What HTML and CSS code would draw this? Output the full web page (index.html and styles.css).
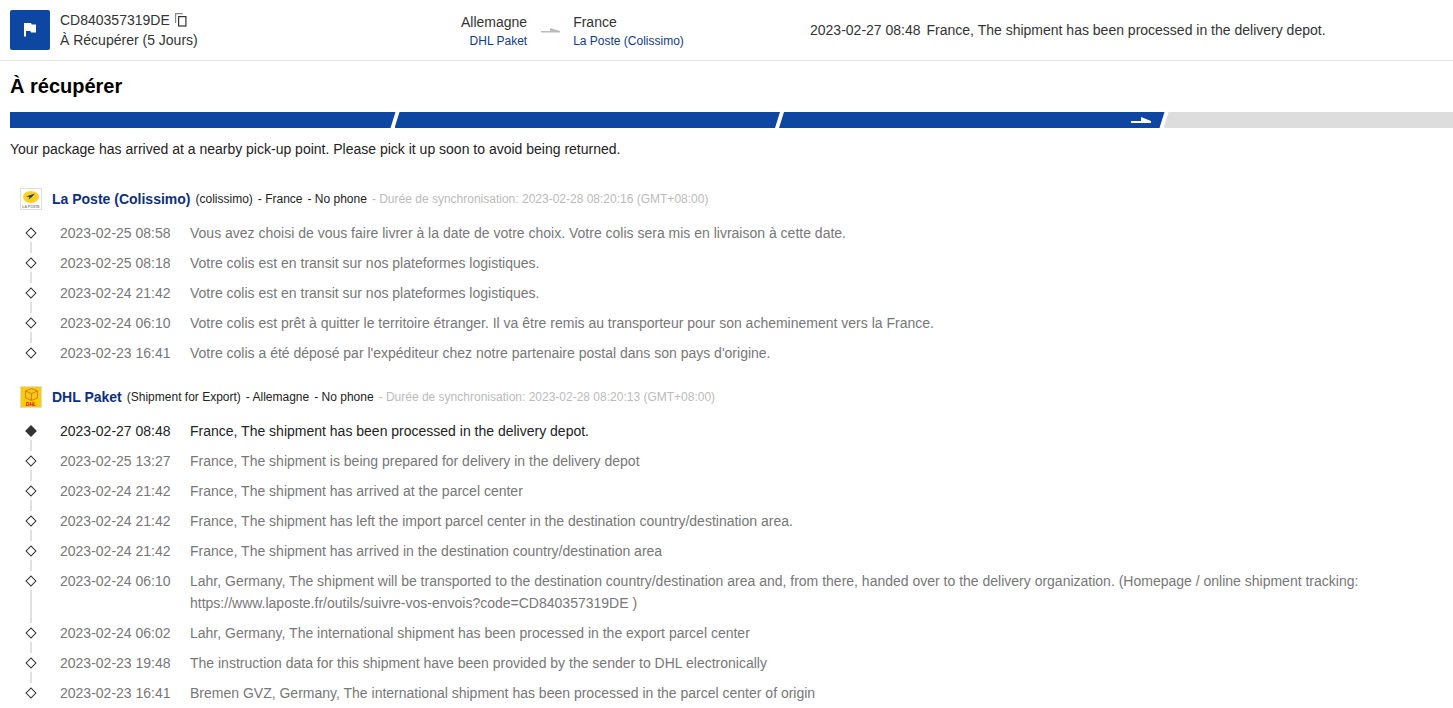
FILE: index.html
```html
<!DOCTYPE html>
<html>
<head>
<meta charset="utf-8">
<title>Suivi de colis</title>
<link rel="stylesheet" href="styles.css">
</head>
<body>

<div class="top">
	<div class="flag">
		<svg width="16" height="16" viewBox="0 0 16 16"><path d="M2 1h7l.6 1.500H14v8H9l-.6-1.500H4v5.500H2z" fill="#fff"/></svg>
	</div>
	<div class="num">
		<div class="num-code">CD840357319DE
			<svg class="copy" width="12" height="14" viewBox="0 0 12 14"><path d="M.6 10V.6h7" fill="none" stroke="#888" stroke-width="1.2"/><rect x="3.600" y="3.600" width="7.300" height="9.400" fill="#fff" stroke="#333" stroke-width="1.200"/></svg>
		</div>
		<div class="num-state">À Récupérer (5 Jours)</div>
	</div>
	<div class="route">
		<div class="from">
			<div>Allemagne</div>
			<div class="carrier">DHL Paket</div>
		</div>
		<svg class="route-arrow" width="19" height="5" viewBox="0 0 19 5"><path d="M0 3h19v1.500H0zM9 0l10 3H9z" fill="#bbb"/></svg>
		<div class="to">
			<div>France</div>
			<div class="carrier">La Poste (Colissimo)</div>
		</div>
	</div>
	<div class="last">
		<span class="last-time">2023-02-27 08:48</span>
		<span>France, The shipment has been processed in the delivery depot.</span>
	</div>
</div>

<h1 class="state">À récupérer</h1>

<div class="bar">
	<div class="seg on"></div>
	<div class="seg on"></div>
	<div class="seg on">
		<svg width="20" height="6" viewBox="0 0 20 6"><path d="M0 4h20v2H0zM10 0l10 4H10z" fill="#fff"/></svg>
	</div>
	<div class="seg"></div>
</div>

<p class="hint">Your package has arrived at a nearby pick-up point. Please pick it up soon to avoid being returned.</p>

<div class="group first">
	<div class="head">
		<svg class="logo" width="22" height="22" viewBox="0 0 22 22">
			<rect x=".5" y=".5" width="21" height="21" fill="#fff" stroke="#ddd"/>
			<ellipse cx="11" cy="9" rx="8" ry="6" fill="#ffd11a"/>
			<path d="M6 8.500l9-3-3 3.500-3.500 2.500 1-2.500z" fill="#1c3f94"/>
			<text class="logo-post" x="11" y="19.500">LA POSTE</text>
		</svg>
		<b>La Poste (Colissimo)</b>
		<span class="sub">(colissimo)</span>
		<span class="sub">- France</span>
		<span class="sub">- No phone</span>
		<span class="sync">- Durée de synchronisation: 2023-02-28 08:20:16 (GMT+08:00)</span>
	</div>
	<div class="row"><span class="time">2023-02-25 08:58</span><span class="msg">Vous avez choisi de vous faire livrer à la date de votre choix. Votre colis sera mis en livraison à cette date.</span></div>
	<div class="row"><span class="time">2023-02-25 08:18</span><span class="msg">Votre colis est en transit sur nos plateformes logistiques.</span></div>
	<div class="row"><span class="time">2023-02-24 21:42</span><span class="msg">Votre colis est en transit sur nos plateformes logistiques.</span></div>
	<div class="row"><span class="time">2023-02-24 06:10</span><span class="msg">Votre colis est prêt à quitter le territoire étranger. Il va être remis au transporteur pour son acheminement vers la France.</span></div>
	<div class="row end"><span class="time">2023-02-23 16:41</span><span class="msg">Votre colis a été déposé par l'expéditeur chez notre partenaire postal dans son pays d'origine.</span></div>
</div>

<div class="group">
	<div class="head">
		<svg class="logo" width="22" height="22" viewBox="0 0 22 22">
			<rect x=".5" y=".5" width="21" height="21" fill="#ffcc00" stroke="#ddd"/>
			<path d="M5.500 5l6-2.500 6 2.500v7l-6 2.500-6-2.500zM5.500 5l6 2.500 6-2.500M11.500 7.500v7" fill="#f5c518" stroke="#d2691e" stroke-width=".8"/>
			<text class="logo-dhl" x="11" y="20">DHL</text>
		</svg>
		<b>DHL Paket</b>
		<span class="sub">(Shipment for Export)</span>
		<span class="sub">- Allemagne</span>
		<span class="sub">- No phone</span>
		<span class="sync">- Durée de synchronisation: 2023-02-28 08:20:13 (GMT+08:00)</span>
	</div>
	<div class="row now"><span class="time">2023-02-27 08:48</span><span class="msg">France, The shipment has been processed in the delivery depot.</span></div>
	<div class="row"><span class="time">2023-02-25 13:27</span><span class="msg">France, The shipment is being prepared for delivery in the delivery depot</span></div>
	<div class="row"><span class="time">2023-02-24 21:42</span><span class="msg">France, The shipment has arrived at the parcel center</span></div>
	<div class="row"><span class="time">2023-02-24 21:42</span><span class="msg">France, The shipment has left the import parcel center in the destination country/destination area.</span></div>
	<div class="row"><span class="time">2023-02-24 21:42</span><span class="msg">France, The shipment has arrived in the destination country/destination area</span></div>
	<div class="row"><span class="time">2023-02-24 06:10</span><span class="msg">Lahr, Germany, The shipment will be transported to the destination country/destination area and, from there, handed over to the delivery organization. (Homepage / online shipment tracking: https://www.laposte.fr/outils/suivre-vos-envois?code=CD840357319DE )</span></div>
	<div class="row"><span class="time">2023-02-24 06:02</span><span class="msg">Lahr, Germany, The international shipment has been processed in the export parcel center</span></div>
	<div class="row"><span class="time">2023-02-23 19:48</span><span class="msg">The instruction data for this shipment have been provided by the sender to DHL electronically</span></div>
	<div class="row end"><span class="time">2023-02-23 16:41</span><span class="msg">Bremen GVZ, Germany, The international shipment has been processed in the parcel center of origin</span></div>
</div>

</body>
</html>
```

FILE: styles.css
```css
html,body{margin:0; padding:0;}
body{background:#fff; color:#333; font-family:"Liberation Sans",Arial,sans-serif; font-size:14px; line-height:20px; overflow:hidden;}

.top{display:flex; align-items:center; height:60px; padding-left:10px; border-bottom:1px solid #e4e4e4;}
.flag{display:flex; align-items:center; justify-content:center; width:40px; height:40px; background:#0e47a1; border-radius:2px;}
.num{width:401px; margin-left:10px;}
.num-code{display:flex; align-items:center; gap:5px;}
.route{display:flex; width:349px; padding-top:2px;}
.from{text-align:right;}
.route-arrow{margin:16px 13px 0 14px;}
.carrier{color:#0e3a8a; font-size:12px; line-height:18px;}
.last{display:flex; gap:6px; color:#333;}

.state{margin:0; padding:15px 10px 0; height:35px; font-size:20px; line-height:20px; color:#000; font-weight:bold;}

.bar{display:flex; height:16px; margin-left:10px; margin-top:1px; overflow:hidden;}
.seg{display:flex; align-items:center; justify-content:flex-end; flex:none; width:385.5px; margin-left:-1px; background:#ddd; clip-path:polygon(5px 0,100% 0,calc(100% - 5px) 100%,0 100%);}
.seg:first-child{margin-left:0; clip-path:polygon(0 0,100% 0,calc(100% - 5px) 100%,0 100%);}
.seg:last-child{flex:1; clip-path:polygon(5px 0,100% 0,100% 100%,0 100%);}
.seg.on{background:#0e47a1;}
.seg svg{margin-right:14px;}

.hint{margin:11px 10px 0; color:#222;}

.group{margin-top:18px;}
.group.first{margin-top:29px;}
.head{display:flex; align-items:center; height:22px; margin-left:20px; margin-bottom:8px; font-size:12px; color:#222; white-space:nowrap;}
.logo{margin-right:10px;}
.logo-post{font-size:3.500px; fill:#888; font-weight:bold; text-anchor:middle;}
.logo-dhl{font-size:5px; fill:#d40511; font-weight:bold; font-style:italic; text-anchor:middle;}
.head b{font-size:14px; color:#0d2f7f; margin-right:5px;}
.sub{margin-right:5px;}
.sync{color:#bbb;}

.row{position:relative; display:flex; padding:4px 40px 4px 60px; line-height:22px; color:#777;}
.time{flex:none; width:130px;}
.msg{flex:1;}
.row::before{content:""; position:absolute; left:27px; top:11px; width:6px; height:6px; background:#fff; border:1.5px solid #333; transform:rotate(45deg);}
.row::after{content:""; position:absolute; left:30px; top:24px; bottom:-5px; width:2px; background:#e0e0e0;}
.row.end::after{display:none;}
.row.now{color:#222;}
.row.now::before{background:#333;}
```
